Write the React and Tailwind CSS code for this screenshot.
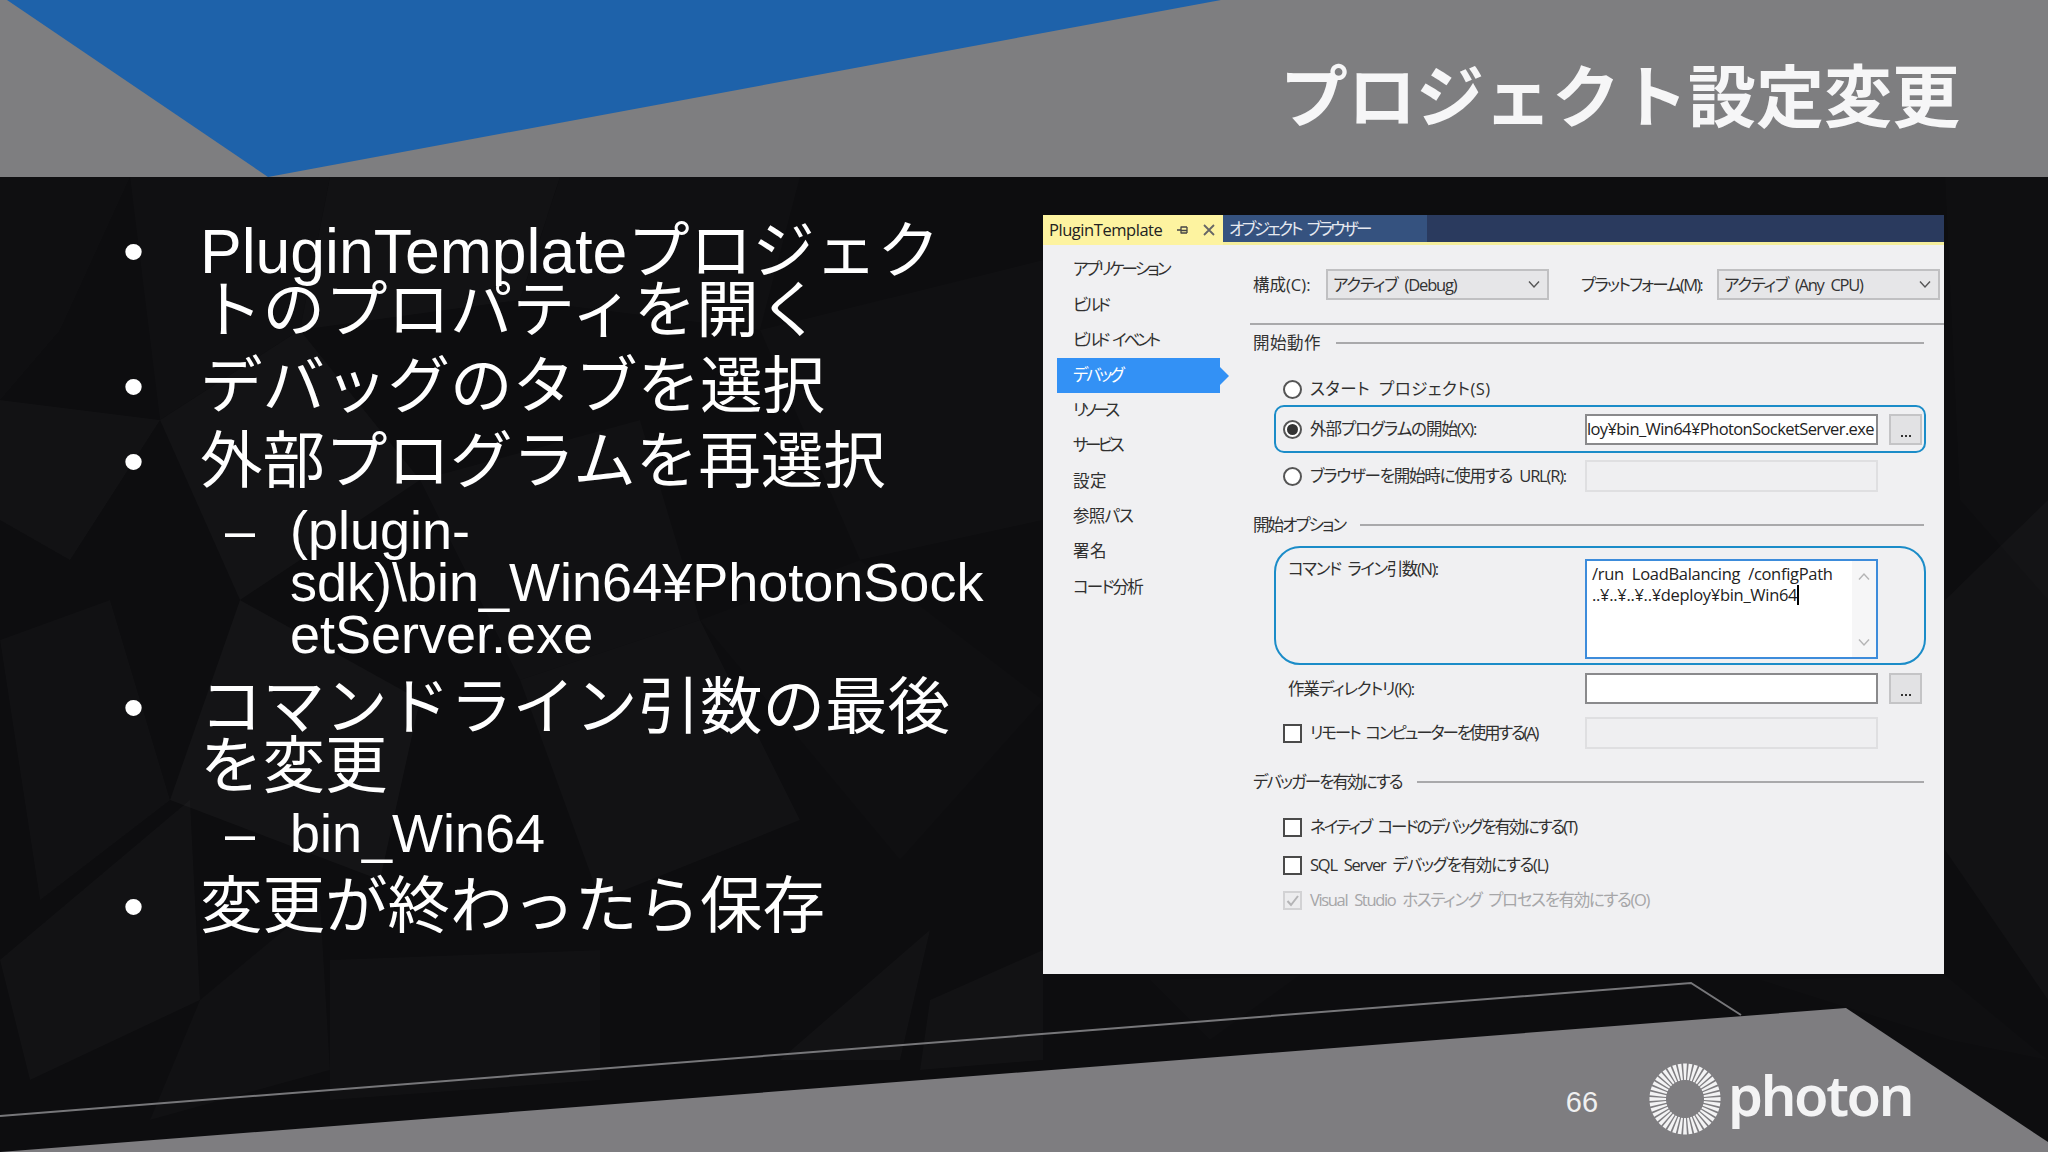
import React from "react";

const facets = [
  ["0,177 130,177 60,330 0,400", 0.01],
  ["130,177 330,177 300,330 160,420", 0.015],
  ["330,177 560,177 520,300 300,330", 0.024],
  ["560,177 800,177 760,330 520,300", 0.014],
  ["0,400 160,420 70,560 0,520", 0.024],
  ["160,420 300,330 420,480 240,600", 0.028],
  ["420,480 640,420 700,620 520,680", 0.018],
  ["760,330 1043,260 1043,520 860,560", 0.016],
  ["0,640 110,600 170,800 40,900", 0.018],
  ["240,600 420,700 380,880 170,800", 0.03],
  ["520,680 700,620 800,820 600,900", 0.022],
  ["700,620 860,560 1043,700 900,860", 0.013],
  ["0,960 190,800 200,1000 30,1080", 0.025],
  ["200,1000 320,900 330,1070 150,1120", 0.018],
  ["330,960 600,950 600,1080 330,1100", 0.018],
  ["780,1060 930,930 900,1060", 0.022],
  ["930,1000 1043,950 1043,1060 920,1070", 0.022],
  ["1150,980 1300,975 1210,1040", 0.013],
  ["1945,177 2048,177 2048,600 1960,500", 0.013],
  ["1945,600 2048,500 2048,1000 1945,850", 0.022],
  ["1760,980 1945,975 2048,1060 1950,1040", 0.01],
];

function Slide() {
  return (
    <svg className="absolute inset-0" width="2048" height="1152" viewBox="0 0 2048 1152">
      <rect x="0" y="0" width="2048" height="177" fill="#7e7e80" />
      <polygon points="7,0 1221,0 268,177" fill="#1e62aa" />
      {facets.map(([p, o]) => (
        <polygon key={p} points={p} fill="#ffffff" opacity={o} />
      ))}
      <polyline points="0,1116 1691,983 1741,1015" fill="none" stroke="#77777a" strokeWidth="2" />
      <polygon points="0,1152 1846,1008 2048,1142 2048,1152" fill="#7e7d80" />
    </svg>
  );
}

function Sunburst() {
  const spokes = Array.from({ length: 40 }, (_, i) => i * 9);
  return (
    <svg width="72" height="72" viewBox="-36 -36 72 72" className="shrink-0">
      {spokes.map((a) => (
        <polygon key={a} points="-0.9,-19 0.9,-19 1.9,-35.5 -1.9,-35.5" fill="#f3f3f4" transform={`rotate(${a})`} />
      ))}
    </svg>
  );
}

function Bullet({ mt = "", children }) {
  return (
    <li className={`flex items-start text-[62.5px] leading-[59px] ${mt}`}>
      <span className="w-[77px] shrink-0 font-['Liberation_Sans'] text-[60px] leading-[59px]">•</span>
      <span className="w-[760px] break-all">{children}</span>
    </li>
  );
}

function Sub({ mt = "", children }) {
  return (
    <li className={`flex items-start pl-[77px] text-[54px] leading-[52px] ${mt}`}>
      <span className="w-[90px] shrink-0 pl-[25px]">–</span>
      <span className="w-[700px] break-all">{children}</span>
    </li>
  );
}

function Chevron({ className = "" }) {
  return (
    <svg className={className} width="14" height="9" viewBox="0 0 14 9" fill="none" stroke="#555" strokeWidth="1.4">
      <path d="M2 1.5 L7 7 L12 1.5" />
    </svg>
  );
}

function Select({ children, width, tracking }) {
  return (
    <div className={`${width} h-[31px] flex items-center justify-between pl-[5px] pr-[6px] bg-[#e6e6e8] border-2 border-[#c0c0c2] text-[#333]`}>
      <span className={`pt-[1px] ${tracking}`}>{children}</span>
      <Chevron />
    </div>
  );
}

function Section({ label, mt, tracking }) {
  return (
    <div className={`h-[22px] flex items-center pl-[3px] pr-[20px] gap-[15px] ${mt}`}>
      <span className={`shrink-0 ${tracking}`}>{label}</span>
      <div className="flex-1 h-[1.5px] bg-[#a9a9ab]" />
    </div>
  );
}

function Radio({ on }) {
  return (
    <span className="w-[19px] h-[19px] shrink-0 rounded-full border-2 border-[#555] bg-white flex items-center justify-center">
      {on && <span className="w-[11px] h-[11px] rounded-full bg-[#333]" />}
    </span>
  );
}

function Check() {
  return <span className="w-[19px] h-[19px] shrink-0 border-2 border-[#4a4a4a] bg-white" />;
}

function Dots() {
  return (
    <div className="w-[33px] h-[31px] ml-[11px] shrink-0 bg-[#e2e2e4] border-2 border-[#c4c4c6] flex items-end justify-center pb-[6px] gap-[2px]">
      <span className="w-[2px] h-[2px] bg-[#333]" />
      <span className="w-[2px] h-[2px] bg-[#333]" />
      <span className="w-[2px] h-[2px] bg-[#333]" />
    </div>
  );
}

function Disabled() {
  return <div className="w-[293px] h-[32px] shrink-0 bg-[#efeff1] border-2 border-[#dfdfe1]" />;
}

const navItems = [
  ["アプリケーション", "tracking-[-2.7px]"],
  ["ビルド", "tracking-[-2.9px]"],
  ["ビルド イベント", "tracking-[-3.2px]"],
  ["デバッグ", "tracking-[-2.4px]"],
  ["リソース", "tracking-[-3.4px]"],
  ["サービス", "tracking-[-3.4px]"],
  ["設定", "tracking-[0.5px]"],
  ["参照パス", "tracking-[-0.8px]"],
  ["署名", "tracking-[0.5px]"],
  ["コード分析", "tracking-[-1.8px]"],
];

function Nav() {
  return (
    <nav className="w-[207px] shrink-0 pt-[7px] pl-[14px]">
      {navItems.map(([n, t]) =>
        n === "デバッグ" ? (
          <div key={n} className={`relative h-[35px] w-[163px] pl-[16px] flex items-center bg-[#3391f5] text-white ${t}`}>
            {n}
            <span className="absolute left-full top-[9px] w-0 h-0 border-y-[9px] border-y-transparent border-l-[9px] border-l-[#3391f5]" />
          </div>
        ) : (
          <div key={n} className={`h-[35.3px] pl-[16px] flex items-center ${t}`}>{n}</div>
        )
      )}
    </nav>
  );
}

function Window() {
  return (
    <section className="w-[901px] h-[759px] shrink-0 bg-[#f0f0f2] flex flex-col text-[16.5px] text-[#303030] font-['Open_Sans','Noto_Sans_CJK_JP',sans-serif] [font-feature-settings:'palt'] [word-spacing:4px] overflow-hidden">
      <div className="h-[30px] shrink-0 flex bg-[#2a3a5e] border-b-[3px] border-b-[#f5ee9c]">
        <div className="w-[180px] h-[30px] shrink-0 bg-[#fdf3a0] text-[#222] flex items-center pl-[6px]">
          <span className="w-[114px] shrink-0 tracking-[-0.45px]">PluginTemplate</span>
          <svg className="ml-[13px] shrink-0" width="14" height="14" viewBox="0 0 14 14" fill="none" stroke="#444" strokeWidth="1.3">
            <path d="M1 7 H5 M5 3.5 V10.5 M5 4 H11 M5 10 H11 M11 4 V10 M5 7.5 H11" />
          </svg>
          <svg className="ml-[12px] shrink-0" width="14" height="14" viewBox="0 0 14 14" fill="none" stroke="#666" strokeWidth="1.8">
            <path d="M2 2 L12 12 M12 2 L2 12" />
          </svg>
        </div>
        <div className="w-[204px] h-[27px] bg-[#35527f] text-[#e6e9f0] flex items-center pl-[6px] pt-[2px] tracking-[-2.5px]">オブジェクト ブラウザー</div>
      </div>
      <div className="flex flex-1 min-h-0">
        <Nav />
        <div className="flex-1 flex flex-col min-w-0">
          <div className="mt-[24px] h-[31px] flex items-center pl-[3px]">
            <span className="w-[73px] shrink-0 pt-[1px]">構成(C):</span>
            <Select width="w-[223px]" tracking="tracking-[-1.2px]">アクティブ (Debug)</Select>
            <span className="ml-[32px] w-[136px] shrink-0 pt-[1px] tracking-[-1.75px]">プラットフォーム(M):</span>
            <Select width="w-[223px]" tracking="tracking-[-1.3px]">アクティブ (Any CPU)</Select>
          </div>
          <div className="mt-[23px] h-[2px] bg-[#a9a9ab]" />
          <Section label="開始動作" mt="mt-[7px]" tracking="tracking-[0.5px]" />
          <div className="mt-[23px] h-[24px] ml-[33px] flex items-center gap-[8px]">
            <Radio />
            <span className="tracking-[0.5px]">スタート プロジェクト(S)</span>
          </div>
          <div className="mt-[4px] ml-[24px] w-[652px] h-[48px] border-2 border-[#1b8cc8] rounded-[10px] flex items-center pl-[7px]">
            <div className="w-[302px] flex items-center gap-[8px] shrink-0">
              <Radio on />
              <span className="pt-[1px] tracking-[-1.05px]">外部プログラムの開始(X):</span>
            </div>
            <div className="w-[293px] h-[31px] shrink-0 bg-white border-2 border-[#8a8a8c] overflow-hidden flex items-center justify-end pr-[2px] pt-[1px] whitespace-nowrap text-[#222] tracking-[-0.6px]">
              deploy¥bin_Win64¥PhotonSocketServer.exe
            </div>
            <Dots />
          </div>
          <div className="mt-[7px] ml-[33px] h-[32px] flex items-center">
            <div className="w-[302px] flex items-center gap-[8px] shrink-0">
              <Radio />
              <span className="tracking-[-1.2px]">ブラウザーを開始時に使用する URL(R):</span>
            </div>
            <Disabled />
          </div>
          <Section label="開始オプション" mt="mt-[22px]" tracking="tracking-[-1.9px]" />
          <div className="mt-[10px] ml-[24px] w-[652px] h-[119px] border-2 border-[#1b8cc8] rounded-[26px] flex items-start pl-[12px] pt-[11px]">
            <span className="w-[297px] shrink-0 -mt-[2px] tracking-[-1.4px]">コマンド ライン引数(N):</span>
            <div className="w-[293px] h-[100px] shrink-0 bg-white border-2 border-[#3d8cdb] flex">
              <div className="flex-1 pl-[5px] pt-[2px] leading-[21px] text-[#222]">
                <div className="tracking-[-0.3px]">/run LoadBalancing /configPath</div>
                <div className="flex items-center tracking-[-0.3px]">..¥..¥..¥..¥deploy¥bin_Win64<span className="w-[1.5px] h-[20px] bg-black" /></div>
              </div>
              <div className="w-[24px] shrink-0 bg-[#f6f6f7] flex flex-col items-center justify-between pt-[11px] pb-[10px]">
                <Chevron className="rotate-180 opacity-40" />
                <Chevron className="opacity-40" />
              </div>
            </div>
          </div>
          <div className="mt-[8px] ml-[38px] h-[31px] flex items-center">
            <span className="w-[297px] shrink-0 pt-[1px] tracking-[-1.15px]">作業ディレクトリ(K):</span>
            <div className="w-[293px] h-[31px] shrink-0 bg-white border-2 border-[#8a8a8c]" />
            <Dots />
          </div>
          <div className="mt-[13px] ml-[33px] h-[32px] flex items-center">
            <div className="w-[302px] flex items-center gap-[8px] shrink-0">
              <Check />
              <span className="tracking-[-2.2px]">リモート コンピューターを使用する(A)</span>
            </div>
            <Disabled />
          </div>
          <Section label="デバッガーを有効にする" mt="mt-[22px]" tracking="tracking-[-1.95px]" />
          <div className="mt-[22px] ml-[33px] h-[24px] flex items-center gap-[8px]">
            <Check />
            <span className="tracking-[-2px]">ネイティブ コードのデバッグを有効にする(T)</span>
          </div>
          <div className="mt-[14px] ml-[33px] h-[24px] flex items-center gap-[8px]">
            <Check />
            <span className="tracking-[-1.25px]">SQL Server デバッグを有効にする(L)</span>
          </div>
          <div className="mt-[11px] ml-[33px] h-[24px] flex items-center gap-[8px] text-[#a6a6a8]">
            <span className="w-[19px] h-[19px] shrink-0 border-2 border-[#d2d2d4] bg-[#ececee] flex items-center justify-center">
              <svg width="13" height="13" viewBox="0 0 13 13" fill="none" stroke="#b4b4b6" strokeWidth="2"><path d="M1.5 7 L5 11 L12 2" /></svg>
            </span>
            <span className="tracking-[-1.35px]">Visual Studio ホスティング プロセスを有効にする(O)</span>
          </div>
        </div>
      </div>
    </section>
  );
}

export default function App() {
  return (
    <div className="relative w-[2048px] h-[1152px] overflow-hidden bg-[#0d0d0f] font-['Liberation_Sans','Noto_Sans_CJK_JP',sans-serif] text-white">
      <Slide />
      <header className="relative h-[177px] flex items-center justify-end pr-[88px] pt-[8px]">
        <h1 className="text-[68px] font-bold leading-none text-[#f6f6f7] font-['Noto_Sans_CJK_JP',sans-serif]">プロジェクト設定変更</h1>
      </header>
      <main className="relative flex h-[797px]">
        <ul className="w-[1043px] shrink-0 pl-[123px] pt-[45px]">
          <Bullet>PluginTemplateプロジェクトのプロパティを開く</Bullet>
          <Bullet mt="mt-[17px]">デバッグのタブを選択</Bullet>
          <Bullet mt="mt-[16px]">外部プログラムを再選択</Bullet>
          <Sub mt="mt-[13px]">(plugin-<br />sdk)\bin_Win64¥PhotonSock<br />etServer.exe</Sub>
          <Bullet mt="mt-[18px]">コマンドライン引数の最後を変更</Bullet>
          <Sub mt="mt-[11px]">bin_Win64</Sub>
          <Bullet mt="mt-[18px]">変更が終わったら保存</Bullet>
        </ul>
        <div className="pt-[38px]">
          <Window />
        </div>
      </main>
      <footer className="relative flex items-start justify-end h-[178px] pr-[136px] pt-[89px]">
        <span className="text-[29px] leading-none mr-[51px] mt-[25px] text-[#f0f0f0] font-['Liberation_Sans']">66</span>
        <Sunburst />
        <span className="ml-[7px] text-[56px] leading-none font-semibold tracking-[-2.4px] text-[#f3f3f4] font-['Noto_Sans',sans-serif] mt-[3px]">photon</span>
      </footer>
    </div>
  );
}
